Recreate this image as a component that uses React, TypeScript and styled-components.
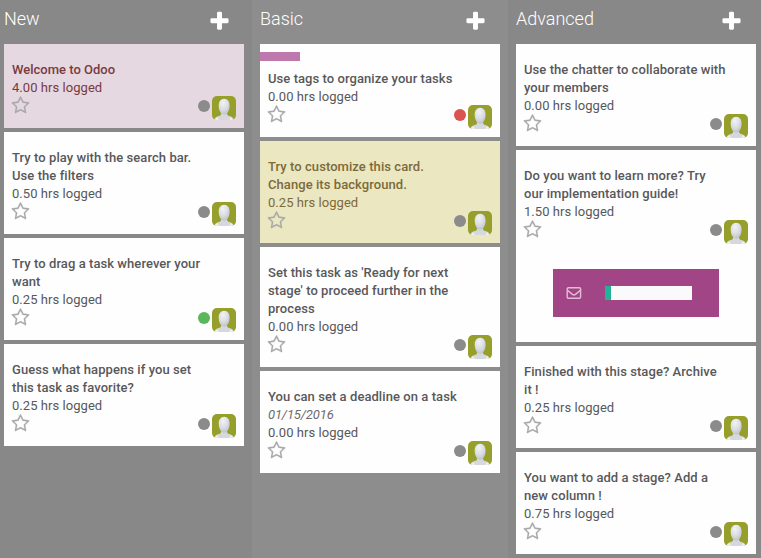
import React from 'react';
import styled, { createGlobalStyle } from 'styled-components';

const GlobalStyle = createGlobalStyle`
  * { box-sizing: border-box; }
  body { margin: 0; background: #888; overflow: hidden; }
`;

const Board = styled.main`
  display: grid;
  grid-template-columns: 252px 256px 253px;
  width: 761px;
  height: 558px;
  overflow: hidden;
  font-family: Roboto, 'Liberation Sans', sans-serif;
  font-size: 13px;
  line-height: 18px;
  color: #58585a;
`;

const Column = styled.section<{ $first?: boolean; $shade: string }>`
  display: flex;
  flex-direction: column;
  padding-left: ${p => (p.$first ? 4 : 8)}px;
  background: ${p => p.$shade};
`;

const ColumnHeader = styled.header`
  display: flex;
  justify-content: space-between;
  width: 240px;
  height: 44px;
  padding: 8px 13px 0 0;
`;

const ColumnTitle = styled.h2`
  margin: 0;
  font-size: 18px;
  font-weight: 300;
  line-height: 22px;
  color: #fff;
`;

const AddButton = styled.button`
  width: 23px;
  height: 23px;
  margin-top: 2px;
  padding: 0;
  border: 0;
  background: none;
  color: #fff;
  svg { display: block; }
`;

const CardList = styled.div`
  display: flex;
  flex-direction: column;
  gap: 4px;
`;

type Tone = 'plain' | 'pink' | 'yellow';
const tones: Record<Tone, { bg: string; fg: string }> = {
  plain: { bg: '#fefefe', fg: '#58585a' },
  pink: { bg: '#e5d8e1', fg: '#7b3a3e' },
  yellow: { bg: '#eae7c1', fg: '#7d6a3a' },
};

const CardBox = styled.article<{ $tone: Tone }>`
  width: 240px;
  padding: 8px;
  background: ${p => tones[p.$tone].bg};
  color: ${p => tones[p.$tone].fg};
`;

const Tag = styled.div`
  width: 40px;
  height: 9px;
  margin-left: -8px;
  background: #be78ab;
`;

const CardTitle = styled.h3`
  margin: 9px 0 0;
  font-size: 13px;
  font-weight: 500;
  line-height: 18px;
`;

const Line = styled.span<{ $spacing?: number }>`
  display: block;
  white-space: nowrap;
  letter-spacing: ${p => p.$spacing ?? 0.065}px;
`;

const Deadline = styled.div`
  font-style: italic;
  letter-spacing: -0.15px;
  color: #6c6c6c;
`;

const Hours = styled.div`
  letter-spacing: 0.05px;
`;

const CardFooter = styled.footer`
  display: flex;
  height: 24px;
  margin-top: -1px;
`;

const StarButton = styled.button`
  width: 19px;
  height: 19px;
  margin: 0 auto 0 -1px;
  padding: 0;
  border: 0;
  background: none;
  color: #a8a8a8;
  svg { display: block; }
`;

const StatusDot = styled.span<{ $color: string }>`
  width: 12px;
  height: 12px;
  margin: 4px 2px 0 0;
  border-radius: 50%;
  background: ${p => p.$color};
`;

const AvatarSvg = styled.svg`
  display: block;
  border-radius: 5px;
`;

const Banner = styled.div`
  display: flex;
  align-items: center;
  width: 166px;
  height: 48px;
  margin: 25px 0 17px 29px;
  padding-left: 13px;
  background: #a14586;
  color: #e2bcd6;
`;

const ProgressTrack = styled.div`
  width: 87px;
  height: 14px;
  margin-left: 23px;
  background: #fafafa;
`;

const ProgressFill = styled.div`
  width: 6px;
  height: 14px;
  background: #22b396;
`;

const PlusIcon = () => (
  <svg width="23" height="23" viewBox="0 0 1792 1792" fill="currentColor">
    <path d="M1600 736v192q0 40-28 68t-68 28h-416v416q0 40-28 68t-68 28h-192q-40 0-68-28t-28-68v-416h-416q-40 0-68-28t-28-68v-192q0-40 28-68t68-28h416v-416q0-40 28-68t68-28h192q40 0 68 28t28 68v416h416q40 0 68 28t28 68z" />
  </svg>
);

const StarIcon = () => (
  <svg width="19" height="19" viewBox="0 0 1792 1792" fill="currentColor" stroke="currentColor" strokeWidth="20">
    <path d="M1201 1004l306-297-422-62-189-382-189 382-422 62 306 297-73 421 378-199 377 199zm527-357q0 22-26 48l-363 354 86 500q1 7 1 20 0 50-41 50-19 0-40-12l-449-236-449 236q-22 12-40 12-21 0-31.5-14.5t-10.5-35.5q0-6 2-20l86-500-364-354q-25-27-25-48 0-37 56-46l502-73 225-455q19-41 49-41t49 41l225 455 502 73q56 9 56 46z" />
  </svg>
);

const MailIcon = () => (
  <svg width="16" height="14" viewBox="0 0 16 14" fill="none" stroke="currentColor" strokeWidth="1.4" strokeLinejoin="round">
    <rect x="1.2" y="1.7" width="13.4" height="10.6" rx="1.2" />
    <path d="M1.4 4.2L6.4 8.4Q8 9.5 9.5 8.4L14.4 4.2" />
  </svg>
);

const Avatar = () => (
  <AvatarSvg width="24" height="24" viewBox="0 0 24 24">
    <defs>
      <radialGradient id="head" cx="0.4" cy="0.25" r="0.8">
        <stop offset="0" stopColor="#f2f3f6" />
        <stop offset="0.55" stopColor="#dadde3" />
        <stop offset="1" stopColor="#bcc1c6" />
      </radialGradient>
    </defs>
    <rect width="24" height="24" fill="#959f29" />
    <path d="M2.4 24Q3 20.6 8.4 19.6L9.5 17h5.2l1 2.6Q21 20.6 21.7 24z" fill="#d5d8dd" />
    <path d="M12.2 2.7C15.8 2.7 17.7 5.6 17.6 9.8C17.5 14.7 15.2 18.8 12.2 18.8C9.1 18.8 6.8 14.7 6.7 9.8C6.6 5.6 8.6 2.7 12.2 2.7z" fill="url(#head)" />
    <path d="M2.4 24q.7-2 3-2.8l1.5 2.8zM21.7 24q-.7-2-3-2.8L17.3 24z" fill="#eceef1" />
  </AvatarSvg>
);

interface Task {
  title: [string, number?][];
  hours: string;
  tone?: Tone;
  dot?: string;
  tag?: boolean;
  deadline?: string;
  banner?: boolean;
}

const TaskCard = ({ title, hours, tone = 'plain', dot = '#8b8b8b', tag, deadline, banner }: Task) => (
  <CardBox $tone={tone}>
    {tag && <Tag />}
    <CardTitle>
      {title.map(([text, spacing]) => <Line key={text} $spacing={spacing}>{text}</Line>)}
    </CardTitle>
    {deadline && <Deadline>{deadline}</Deadline>}
    <Hours>{hours} hrs logged</Hours>
    <CardFooter>
      <StarButton aria-label="Favorite"><StarIcon /></StarButton>
      <StatusDot $color={dot} />
      <Avatar />
    </CardFooter>
    {banner && (
      <Banner>
        <MailIcon />
        <ProgressTrack><ProgressFill /></ProgressTrack>
      </Banner>
    )}
  </CardBox>
);

const columns: { name: string; shade: string; tasks: Task[] }[] = [
  {
    name: 'New',
    shade: '#888888',
    tasks: [
      { title: [['Welcome to Odoo', 0]], hours: '4.00', tone: 'pink' },
      { title: [['Try to play with the search bar.'], ['Use the filters']], hours: '0.50' },
      { title: [['Try to drag a task wherever your'], ['want']], hours: '0.25', dot: '#5ab75c' },
      { title: [['Guess what happens if you set'], ['this task as favorite?']], hours: '0.25' },
    ],
  },
  {
    name: 'Basic',
    shade: '#8d8d8d',
    tasks: [
      { title: [['Use tags to organize your tasks']], hours: '0.00', dot: '#da534f', tag: true },
      { title: [['Try to customize this card.'], ['Change its background.']], hours: '0.25', tone: 'yellow' },
      { title: [["Set this task as 'Ready for next"], ["stage' to proceed further in the"], ['process']], hours: '0.00' },
      { title: [['You can set a deadline on a task']], hours: '0.00', deadline: '01/15/2016' },
    ],
  },
  {
    name: 'Advanced',
    shade: '#888888',
    tasks: [
      { title: [['Use the chatter to collaborate with'], ['your members']], hours: '0.00' },
      { title: [['Do you want to learn more? Try'], ['our implementation guide!']], hours: '1.50', banner: true },
      { title: [['Finished with this stage? Archive'], ['it !']], hours: '0.25' },
      { title: [['You want to add a stage? Add a'], ['new column !']], hours: '0.75' },
    ],
  },
];

export default function App() {
  return (
    <>
      <GlobalStyle />
      <Board>
        {columns.map((column, i) => (
          <Column key={column.name} $first={i === 0} $shade={column.shade}>
            <ColumnHeader>
              <ColumnTitle>{column.name}</ColumnTitle>
              <AddButton aria-label="Add task"><PlusIcon /></AddButton>
            </ColumnHeader>
            <CardList>
              {column.tasks.map(task => <TaskCard key={task.title[0][0]} {...task} />)}
            </CardList>
          </Column>
        ))}
      </Board>
    </>
  );
}
